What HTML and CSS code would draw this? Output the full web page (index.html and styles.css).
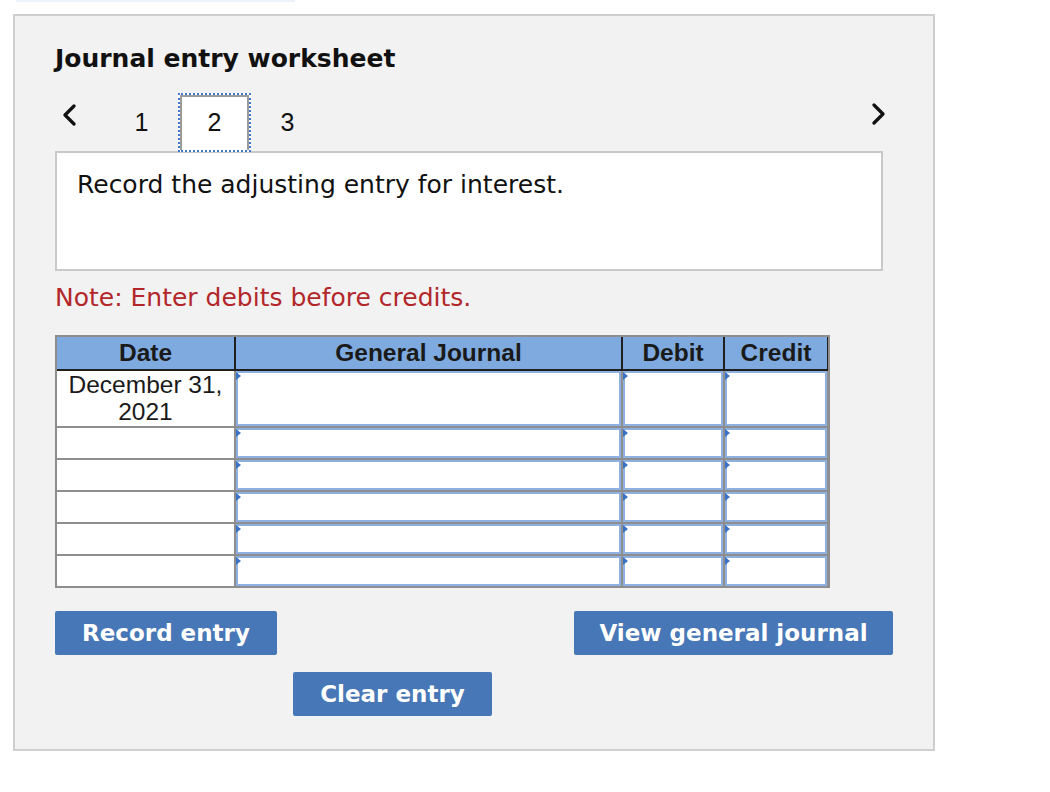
FILE: index.html
```html
<!DOCTYPE html>
<html lang="en">
<head>
<meta charset="utf-8">
<title>Journal entry worksheet</title>
<link rel="stylesheet" href="styles.css">
</head>
<body>
<div class="topbar"></div>
<div class="panel">
  <h1 class="title">Journal entry worksheet</h1>
  <div class="nav">
    <span class="chev prev">
      <svg width="14" height="22" viewBox="0 0 14 22"><polyline points="12,2 3,11 12,20" fill="none" stroke="#111" stroke-width="3.2" stroke-linecap="round" stroke-linejoin="round"/></svg>
    </span>
    <div class="tabs">
      <div class="tab">1</div>
      <div class="tab active">2</div>
      <div class="tab">3</div>
    </div>
    <span class="chev next">
      <svg width="14" height="22" viewBox="0 0 14 22"><polyline points="2,2 11,11 2,20" fill="none" stroke="#111" stroke-width="3.2" stroke-linecap="round" stroke-linejoin="round"/></svg>
    </span>
  </div>
  <div class="instruction">Record the adjusting entry for interest.</div>
  <p class="note">Note: Enter debits before credits.</p>
  <div class="jtable">
    <div class="jhead">
      <div class="hcell">Date</div>
      <div class="hcell">General Journal</div>
      <div class="hcell">Debit</div>
      <div class="hcell">Credit</div>
    </div>
    <div class="jbody">
      <div class="dcell first">December 31,<br>2021</div>
      <div class="icell first"></div>
      <div class="icell first"></div>
      <div class="icell first"></div>

      <div class="dcell"></div>
      <div class="icell"></div>
      <div class="icell"></div>
      <div class="icell"></div>

      <div class="dcell"></div>
      <div class="icell"></div>
      <div class="icell"></div>
      <div class="icell"></div>

      <div class="dcell"></div>
      <div class="icell"></div>
      <div class="icell"></div>
      <div class="icell"></div>

      <div class="dcell"></div>
      <div class="icell"></div>
      <div class="icell"></div>
      <div class="icell"></div>

      <div class="dcell"></div>
      <div class="icell"></div>
      <div class="icell"></div>
      <div class="icell"></div>
    </div>
  </div>
  <div class="btnrow">
    <button class="btn btn-record">Record entry</button>
    <button class="btn btn-view">View general journal</button>
  </div>
  <div class="btnrow2">
    <button class="btn btn-clear">Clear entry</button>
  </div>
</div>
</body>
</html>
```

FILE: styles.css
```css
* { box-sizing: border-box; }

body {
  margin: 0;
  background: #ffffff;
  font-family: "DejaVu Sans", Verdana, sans-serif;
  color: #111;
}

.topbar {
  width: 279px;
  height: 2px;
  margin-left: 16px;
  background: #edf1f9;
}

.panel {
  width: 922px;
  margin: 12px 0 0 13px;
  border: 2px solid #cfcfcf;
  background: #f2f2f2;
  padding: 29px 0 33px 40px;
}

.title {
  margin: 0;
  font-size: 25px;
  line-height: 28px;
  font-weight: bold;
  color: #111;
}

.nav {
  display: flex;
  align-items: flex-start;
  width: 831px;
  margin-top: 20px;
  position: relative;
  z-index: 1;
  margin-bottom: -1px;
}

.chev {
  display: flex;
  margin-top: 11px;
}
.chev svg { display: block; }
.prev { margin-left: 7px; }
.next { margin-left: auto; margin-top: 10px; }

.tabs {
  display: flex;
  margin-left: 29px;
}

.tab {
  width: 73px;
  height: 59px;
  display: flex;
  align-items: center;
  justify-content: center;
  font-family: "Liberation Sans", Arial, sans-serif;
  font-size: 25px;
  color: #111;
}

.tab.active {
  background: #ffffff;
  border: 2px dotted #3f78c9;
  box-shadow: inset 2px 2px 0 #9b9b9b, inset -2px 0 0 #9b9b9b;
}

.instruction {
  width: 828px;
  height: 120px;
  background: #ffffff;
  border: 2px solid #c9c9c9;
  padding: 18px 0 0 20px;
  font-size: 25px;
  line-height: 28px;
  color: #111;
}

.note {
  margin: 13px 0 0;
  font-size: 25px;
  line-height: 28px;
  color: #b3272a;
}

.jtable {
  margin-top: 23px;
  width: 775px;
  border: 2px solid #8e8e8e;
  background: #8e8e8e;
  font-family: "Liberation Sans", Arial, sans-serif;
}

.jhead {
  display: grid;
  grid-template-columns: 177px 385px 100px 102px;
  column-gap: 2px;
  background: #1f1f1f;
  border-bottom: 2px solid #1f1f1f;
}

.hcell {
  height: 32px;
  background: #7eaadf;
  display: flex;
  align-items: center;
  justify-content: center;
  font-weight: bold;
  font-size: 24.5px;
  color: #1a1a1a;
}

.jbody {
  display: grid;
  grid-template-columns: 177px 385px 100px 102px;
  grid-auto-rows: 30px;
  grid-template-rows: 55px;
  gap: 2px;
}

.dcell {
  background: #ffffff;
  text-align: center;
  font-size: 24.5px;
  line-height: 27px;
  color: #1a1a1a;
}

.icell {
  position: relative;
  background: #ffffff;
  box-shadow: inset 0 0 0 2px #8fb1e2;
}

.icell::before {
  content: "";
  position: absolute;
  left: 0;
  top: 1px;
  border-left: 5px solid #3a72c4;
  border-top: 4px solid transparent;
  border-bottom: 4px solid transparent;
}

.btnrow {
  display: flex;
  justify-content: space-between;
  width: 838px;
  margin-top: 23px;
}

.btnrow2 {
  margin-top: 17px;
  padding-left: 238px;
}

.btn {
  display: block;
  height: 44px;
  border: none;
  border-radius: 2px;
  background: #4777b6;
  color: #ffffff;
  font-family: "DejaVu Sans", Verdana, sans-serif;
  font-weight: bold;
  font-size: 23px;
  padding: 0;
  text-align: center;
}

.btn-record { width: 222px; }
.btn-view { width: 319px; }
.btn-clear { width: 199px; }
```
